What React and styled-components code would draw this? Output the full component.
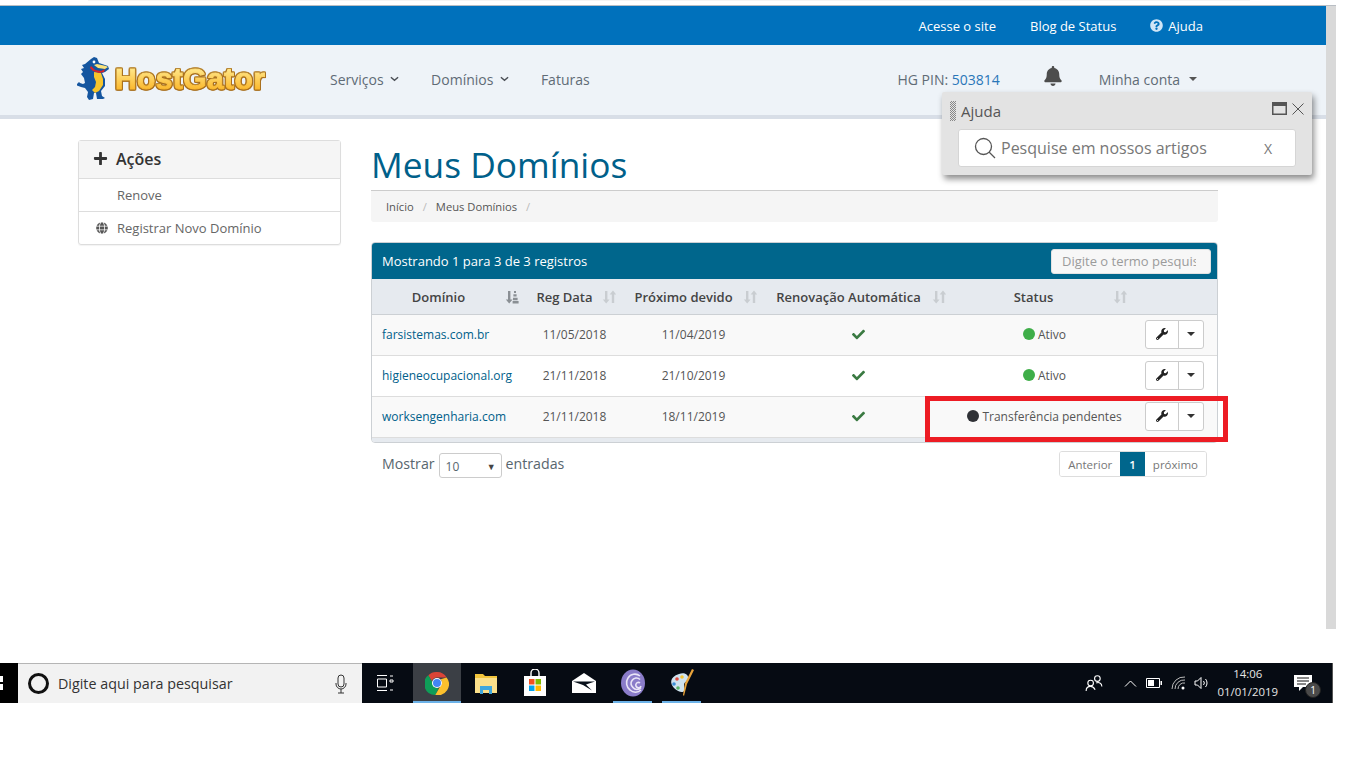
import React from 'react';
import styled, { createGlobalStyle, css } from 'styled-components';
import { FaBell, FaCheck, FaGlobe, FaPlus, FaQuestionCircle, FaWrench } from 'react-icons/fa';

const rows = [
  { domain: 'farsistemas.com.br', reg: '11/05/2018', due: '11/04/2019', status: 'Ativo', dot: '#3fae49' },
  { domain: 'higieneocupacional.org', reg: '21/11/2018', due: '21/10/2019', status: 'Ativo', dot: '#3fae49' },
  { domain: 'worksengenharia.com', reg: '21/11/2018', due: '18/11/2019', status: 'Transferência pendentes', dot: '#2f3136' },
];

function SortIcon({ sorted }) {
  return (
    <SortSvg viewBox="0 0 14 14" $sorted={sorted}>
      <path d="M3 1h2.400v8.400H7.600L4.200 13.400 0.800 9.400H3z" />
      {sorted ? (
        <path d="M9 1h2v2H9zM8.400 4.200h3.200v2.400H8.400zM8 7.800h4.600v2.400H8zM7.600 11h6v2.400h-6z" />
      ) : (
        <path d="M9.800 13V4.600H7.600L11 .6l3.400 4h-2.200V13z" />
      )}
    </SortSvg>
  );
}

function Gator() {
  return (
    <svg width="33" height="45" viewBox="0 0 33 45">
      <path fill="#14559f" d="M14 2l3-2 3 1 2 5 9 3 1 3-4 3-3 1 3 6v7l-4 5 1 5 3 2-2 1h-6l-1-6h-2l-1 6-4 1-2-3 1-5-3-4-4-1-5-2 3-3 1 1 3 1 2-1-1-5-3-4 2-2-2-3 3-1-2-3 3-1z" />
      <path fill="#f7c52b" d="M17 15l7 1 2 6v6l-4 6-4 2-3-3 3-3 1-5-2-5z" />
      <path fill="#d8232a" d="M14 9l4 4 6 1 4-2-1 3-5 1-6-2-3-3z" />
      <path fill="#fbe27a" d="M20 7l9 2 2 1-3 2-7-1-4-3z" />
      <circle cx="17" cy="5" r="1.400" fill="#fff" />
    </svg>
  );
}

function ChromeIcon() {
  return (
    <svg width="24" height="24" viewBox="0 0 24 24">
      <path fill="#db4437" d="M12 1a11 11 0 0 1 9.600 5.500H12a5.500 5.500 0 0 0-5.200 3.700L3.300 4.300A11 11 0 0 1 12 1z" />
      <path fill="#0f9d58" d="M3.300 4.300l4.800 8.300a5.500 5.500 0 0 0 5.600 4.700l-3.400 6.600A11 11 0 0 1 3.300 4.300z" />
      <path fill="#fbc02d" d="M21.600 6.500A11 11 0 0 1 10.300 23.900l4.800-8.400a5.500 5.500 0 0 0 .6-7.200z" />
      <circle cx="12" cy="12" r="5" fill="#fff" />
      <circle cx="12" cy="12" r="4" fill="#4285f4" />
    </svg>
  );
}

function FolderIcon() {
  return (
    <svg width="24" height="24" viewBox="0 0 24 24">
      <path fill="#f2c53d" d="M1 3h8l2 2h12v17H1z" />
      <path fill="#fbe08a" d="M1 7h22v15H1z" />
      <path fill="#3fa7dd" d="M6 15h12v8h-3v-4H9v4H6z" />
    </svg>
  );
}

function StoreIcon() {
  return (
    <svg width="24" height="28" viewBox="0 0 24 28">
      <path fill="none" stroke="#fff" strokeWidth="1.400" d="M8 8V4a4 4 0 0 1 8 0v4" />
      <path fill="#fff" d="M1 7h22v20H1z" />
      <path fill="#f25022" d="M6 10h5.500v5.500H6z" />
      <path fill="#7fba00" d="M12.500 10H18v5.500h-5.500z" />
      <path fill="#00a4ef" d="M6 16.500h5.500V22H6z" />
      <path fill="#ffb900" d="M12.500 16.500H18V22h-5.500z" />
    </svg>
  );
}

function MailIcon() {
  return (
    <svg width="24" height="22" viewBox="0 0 24 22">
      <path fill="#fff" d="M12 1l12 8v12H0V9z" />
      <path fill="#07101a" d="M1 9.500l22 0-9 3 6 6-9-5.500-10-3.500z" />
    </svg>
  );
}

function TorrentIcon() {
  return (
    <svg width="24" height="28" viewBox="0 0 24 28">
      <ellipse cx="12" cy="14" rx="12" ry="13.500" fill="#8a7cc9" />
      <path fill="none" stroke="#e9e5f7" strokeWidth="1.600" d="M19 7a8 8 0 0 0-12 2 9 9 0 0 0 2 12 8 8 0 0 0 11 0M19 10.500a5 5 0 0 0-8 1 5 5 0 0 0 1 7 5 5 0 0 0 8 0M19 14a2.500 2.500 0 0 0-4 1 2.500 2.500 0 0 0 5 2" />
    </svg>
  );
}

function PaintIcon() {
  return (
    <svg width="26" height="30" viewBox="0 0 26 30">
      <path fill="#cfe3ef" d="M10 6c6-2 10 1 9 5-1 3-4 3-4 6s1 4 0 6-6 1-10-3S0 9 10 6z" />
      <circle cx="8" cy="11" r="1.800" fill="#e04b3f" />
      <circle cx="13" cy="9" r="1.800" fill="#f4c534" />
      <circle cx="5" cy="16" r="1.800" fill="#3d8fd6" />
      <circle cx="9" cy="20" r="1.800" fill="#58b368" />
      <path fill="#e8a33a" d="M23 1l2 1-7 14-3 12-1-1 2-12z" />
    </svg>
  );
}

function App() {
  return (
    <Page>
      <GlobalStyle />
      <Sliver />
      <Screen>
        <Browser>
          <TopBar>
            <TopLink>Acesse o site</TopLink>
            <TopLink>Blog de Status</TopLink>
            <TopLink>
              <HelpMark><FaQuestionCircle /></HelpMark>
              Ajuda
            </TopLink>
          </TopBar>
          <NavBar>
            <Logo>
              <Gator />
              <LogoText>HostGator</LogoText>
            </Logo>
            <NavMenu>
              <NavItem>Serviços<Chevron viewBox="0 0 10 6"><path d="M1 1l4 3.500L9 1" /></Chevron></NavItem>
              <NavItem>Domínios<Chevron viewBox="0 0 10 6"><path d="M1 1l4 3.500L9 1" /></Chevron></NavItem>
              <NavItem>Faturas</NavItem>
            </NavMenu>
            <NavRight>
              <Pin>HG PIN: <PinValue>503814</PinValue></Pin>
              <BellWrap><FaBell /></BellWrap>
              <Account>Minha conta<AccountCaret /></Account>
            </NavRight>
          </NavBar>
          <Content>
            <ActionsCard>
              <ActionsHead><FaPlus />Ações</ActionsHead>
              <ActionRow><ActionIcon /><span>Renove</span></ActionRow>
              <ActionRow><ActionIcon><FaGlobe /></ActionIcon><span>Registrar Novo Domínio</span></ActionRow>
            </ActionsCard>
            <Main>
              <Title>Meus Domínios</Title>
              <Breadcrumb>
                <span>Início</span><Slash>/</Slash><span>Meus Domínios</span><Slash>/</Slash>
              </Breadcrumb>
              <TablePanel>
                <PanelHead>
                  <span>Mostrando 1 para 3 de 3 registros</span>
                  <SearchInput readOnly placeholder="Digite o termo pesquisa" />
                </PanelHead>
                <HeadRow>
                  <HeadCell><HeadLabel>Domínio</HeadLabel><SortIcon sorted /></HeadCell>
                  <HeadCell><HeadLabel>Reg Data</HeadLabel><SortIcon /></HeadCell>
                  <HeadCell><HeadLabel>Próximo devido</HeadLabel><SortIcon /></HeadCell>
                  <HeadCell><HeadLabel>Renovação Automática</HeadLabel><SortIcon /></HeadCell>
                  <HeadCell><HeadLabel>Status</HeadLabel><SortIcon /></HeadCell>
                  <span />
                </HeadRow>
                {rows.map((row, i) => (
                  <BodyRow key={row.domain} $odd={i % 2 === 0}>
                    <DomainLink>{row.domain}</DomainLink>
                    <DateCell>{row.reg}</DateCell>
                    <DateCell>{row.due}</DateCell>
                    <CheckCell><FaCheck /></CheckCell>
                    <StatusCell><Dot $color={row.dot} />{row.status}</StatusCell>
                    <ActionCell>
                      <ToolGroup>
                        <WrenchButton><FaWrench /></WrenchButton>
                        <CaretButton><SmallCaret /></CaretButton>
                      </ToolGroup>
                    </ActionCell>
                  </BodyRow>
                ))}
                <PanelFoot />
                <Highlight />
              </TablePanel>
              <TableFooter>
                <Entries>
                  Mostrar
                  <SelectBox>10<SelectArrow>▼</SelectArrow></SelectBox>
                  entradas
                </Entries>
                <Pagination>
                  <PageButton>Anterior</PageButton>
                  <PageButton $active>1</PageButton>
                  <PageButton>próximo</PageButton>
                </Pagination>
              </TableFooter>
            </Main>
          </Content>
        </Browser>
        <Scrollbar />
        <HelpPanel>
          <HelpHead>
            <Grip />
            <HelpTitle>Ajuda</HelpTitle>
            <svg width="15" height="13" viewBox="0 0 15 13">
              <path fill="#555" d="M0 0h15v13H0z" />
              <path fill="#e3e3e3" d="M1.500 4h12v7.500h-12z" />
            </svg>
            <svg width="12" height="12" viewBox="0 0 12 12">
              <path stroke="#555" strokeWidth="1" d="M.5.500l11 11M11.500.500l-11 11" />
            </svg>
          </HelpHead>
          <HelpSearch>
            <svg width="22" height="22" viewBox="0 0 22 22" fill="none" stroke="#555" strokeWidth="1.300">
              <circle cx="9.500" cy="9.500" r="8" />
              <path d="M15 15l6 6" />
            </svg>
            <HelpPlaceholder>Pesquise em nossos artigos</HelpPlaceholder>
            <HelpClear>X</HelpClear>
          </HelpSearch>
        </HelpPanel>
      </Screen>
      <Taskbar>
        <StartEdge />
        <TaskSearch>
          <Cortana />
          <TaskSearchText>Digite aqui para pesquisar</TaskSearchText>
          <svg width="12" height="20" viewBox="0 0 12 20" fill="none" stroke="#333" strokeWidth="1">
            <rect x="3" y="1" width="6" height="12" rx="3" />
            <path d="M1 9v1a5 5 0 0 0 10 0V9M6 15v4M3 19h6" />
          </svg>
        </TaskSearch>
        <TaskView>
          <svg width="18" height="18" viewBox="0 0 18 18" fill="none" stroke="#fff" strokeWidth="1">
            <path d="M1 1.500h10M1 16.500h10M1.500 5h9v8h-9zM14 2h3M14 6h3v2h-3zM14 16h3" />
          </svg>
        </TaskView>
        <TaskApp $active $bar><ChromeIcon /></TaskApp>
        <TaskApp><FolderIcon /></TaskApp>
        <TaskApp><StoreIcon /></TaskApp>
        <TaskApp><MailIcon /></TaskApp>
        <TaskApp $bar><TorrentIcon /></TaskApp>
        <TaskApp $bar><PaintIcon /></TaskApp>
        <Tray>
          <svg width="18" height="18" viewBox="0 0 16 16" fill="none" stroke="#fff" strokeWidth="1">
            <circle cx="5" cy="8" r="2.500" /><path d="M1 15c0-3 2-4 4-4s3 1 4 3" />
            <circle cx="11" cy="4" r="2.500" /><path d="M10 8c2-1 5 0 5 3" />
          </svg>
          <TrayCaret viewBox="0 0 12 7"><path d="M.5 6.500L6 1l5.500 5.500" /></TrayCaret>
          <svg width="16" height="10" viewBox="0 0 16 10">
            <path fill="none" stroke="#fff" d="M.5.500h13v9H.5z" />
            <path fill="#fff" d="M2 2h6v6H2zM14.500 3H16v4h-1.500z" />
          </svg>
          <svg width="16" height="14" viewBox="0 0 16 14" fill="none" stroke="#bbb" strokeWidth="1">
            <path d="M1 13A12 12 0 0 1 14 1M4 13a9 9 0 0 1 10-9M7 13a6 6 0 0 1 7-6" />
            <circle cx="12" cy="12" r="1.500" fill="#fff" stroke="none" />
          </svg>
          <VolumeIcon width="16" height="14" viewBox="0 0 16 14" fill="none" stroke="#fff" strokeWidth="1">
            <path d="M1 5h2.500L7 1.500v11L3.500 9H1zM9.500 5a3 3 0 0 1 0 4M11.500 3a6 6 0 0 1 0 8" />
          </VolumeIcon>
          <Clock><span>14:06</span><span>01/01/2019</span></Clock>
          <Notice>
            <svg width="18" height="16" viewBox="0 0 18 16">
              <path fill="#fff" d="M0 0h18v12h-9l-4 4v-4H0z" />
              <path stroke="#111" d="M3 3h12M3 6h12M3 9h9" />
            </svg>
            <NoticeBadge>1</NoticeBadge>
          </Notice>
        </Tray>
      </Taskbar>
    </Page>
  );
}

const GlobalStyle = createGlobalStyle`
  html, body {
    margin: 0;
    padding: 0;
    background: #fff;
    overflow: hidden;
  }
  * {
    box-sizing: border-box;
  }
`;

const Page = styled.div`
  width: 1366px;
  height: 768px;
  font-family: "Open Sans", "Liberation Sans", sans-serif;
  color: #58666e;
`;

const Sliver = styled.div`
  width: 1162px;
  height: 1px;
  margin-left: 88px;
  background: #f3f3f3;
`;

const Screen = styled.div`
  position: relative;
  display: flex;
  width: 1336px;
  height: 624px;
  margin-top: 4px;
  border-top: 1px solid #b9bec4;
`;

const Browser = styled.div`
  flex: 1;
  display: flex;
  flex-direction: column;
  min-width: 0;
`;

const Scrollbar = styled.div`
  width: 10px;
  background: #d9d9d9;
`;

const TopBar = styled.div`
  height: 39px;
  background: #0071bc;
  display: flex;
  align-items: center;
  justify-content: flex-end;
  gap: 34px;
  padding-right: 123px;
`;

const TopLink = styled.a`
  display: flex;
  align-items: center;
  color: #fff;
  font-size: 13px;
`;

const HelpMark = styled.span`
  display: flex;
  margin-right: 5px;
  color: #cfe6f7;
  font-size: 13px;
`;

const NavBar = styled.div`
  height: 74px;
  background: #eef3f8;
  border-bottom: 4px solid #d8dee7;
  display: flex;
  align-items: center;
  padding: 0 129px 2px 77px;
`;

const Logo = styled.div`
  display: flex;
  align-items: center;
  width: 253px;
  gap: 5px;
`;

const LogoText = styled.span`
  font: bold 30px "Liberation Sans", Arial, sans-serif;
  letter-spacing: 0.4px;
  background: linear-gradient(#ffe382 25%, #fbb92e 80%);
  -webkit-background-clip: text;
  background-clip: text;
  color: transparent;
  -webkit-text-stroke: 1px transparent;
  filter: drop-shadow(1px 0 0 #a9701f) drop-shadow(-1px 0 0 #a9701f) drop-shadow(0 1px 0 #a9701f) drop-shadow(0 -1px 0 #b98a3a);
`;

const NavMenu = styled.div`
  display: flex;
  align-items: center;
  gap: 32px;
  font-size: 14px;
`;

const NavItem = styled.a`
  display: flex;
  align-items: center;
  color: #5f6b76;
`;

const Chevron = styled.svg`
  width: 9px;
  height: 6px;
  margin-left: 6.500px;
  fill: none;
  stroke: #4a4f55;
  stroke-width: 1.600;
`;

const NavRight = styled.div`
  margin-left: auto;
  display: flex;
  align-items: center;
  font-size: 14px;
`;

const Pin = styled.span`
  color: #5f6b76;
`;

const PinValue = styled.span`
  color: #2a76b8;
`;

const BellWrap = styled.span`
  display: flex;
  margin: -6px 36px 0 43px;
  color: #4d4d4d;
  font-size: 20px;
`;

const Account = styled.span`
  display: flex;
  align-items: center;
  color: #5f6b76;
`;

const AccountCaret = styled.i`
  margin-left: 9px;
  border-top: 4px solid #555;
  border-left: 4px solid transparent;
  border-right: 4px solid transparent;
`;

const Content = styled.div`
  display: grid;
  grid-template-columns: 263px 1fr;
  column-gap: 30px;
  align-items: start;
  padding: 21px 108px 0 78px;
`;

const ActionsCard = styled.div`
  border: 1px solid #ddd;
  border-radius: 3px;
  box-shadow: 0 1px 1px rgba(0, 0, 0, 0.05);
`;

const ActionsHead = styled.div`
  height: 37px;
  display: flex;
  align-items: center;
  gap: 8px;
  padding: 0 0 2px 14px;
  background: #f5f5f5;
  color: #333;
  font-size: 16px;
  font-weight: 600;
  svg {
    font-size: 15px;
  }
`;

const ActionRow = styled.div`
  height: 33px;
  display: flex;
  align-items: center;
  border-top: 1px solid #ddd;
  font-size: 13px;
  color: #666;
`;

const ActionIcon = styled.span`
  width: 38px;
  padding-left: 17px;
  display: flex;
  color: #555;
  font-size: 12px;
`;

const Main = styled.div`
  min-width: 0;
`;

const Title = styled.h1`
  height: 50px;
  margin: 0;
  font-size: 35.300px;
  line-height: 48px;
  font-weight: 400;
  color: #00608a;
`;

const Breadcrumb = styled.div`
  height: 32px;
  display: flex;
  align-items: center;
  padding-left: 15px;
  background: #f5f5f5;
  border-top: 1px solid #ccc;
  border-radius: 0 0 3px 3px;
  font-size: 11.200px;
  color: #555;
`;

const Slash = styled.span`
  margin: 0 9px;
  color: #bbb;
`;

const TablePanel = styled.div`
  position: relative;
  margin-top: 20px;
  border: 1px solid #ccd0d4;
  border-radius: 4px;
`;

const PanelHead = styled.div`
  height: 36px;
  display: flex;
  align-items: center;
  justify-content: space-between;
  padding: 0 6px 0 10px;
  background: #00668c;
  border-radius: 3px 3px 0 0;
  color: #fff;
  font-size: 13px;
`;

const SearchInput = styled.input`
  width: 160px;
  height: 25px;
  padding: 0 14px 0 10px;
  border: 1px solid #e2e2e2;
  border-radius: 3px;
  background: #f7f7f7;
  font: 13px "Open Sans", sans-serif;
  &::placeholder {
    color: #9b9b9b;
  }
`;

const tableColumns = css`
  display: grid;
  grid-template-columns: 155px 97px 141px 189px 181px 1fr;
`;

const HeadRow = styled.div`
  ${tableColumns}
  height: 36px;
  padding-top: 1px;
  align-items: center;
  background: #e6eaef;
  border-bottom: 1px solid #ccd0d4;
`;

const HeadCell = styled.div`
  display: flex;
  align-items: center;
  padding: 0 8px 0 0;
`;

const HeadLabel = styled.span`
  flex: 1;
  text-align: center;
  font-size: 13px;
  font-weight: 600;
  color: #444;
  white-space: nowrap;
`;

const SortSvg = styled.svg`
  flex: none;
  width: 14px;
  height: 14px;
  fill: ${(p) => (p.$sorted ? '#8a8f94' : '#c9cdd1')};
`;

const BodyRow = styled.div`
  ${tableColumns}
  height: 41px;
  padding-bottom: 2px;
  align-items: center;
  background: ${(p) => (p.$odd ? '#f9f9f9' : '#fff')};
  border-bottom: 1px solid #ddd;
  font-size: 12px;
  color: #555;
`;

const DomainLink = styled.a`
  padding-left: 10px;
  color: #00608a;
  white-space: nowrap;
`;

const DateCell = styled.div`
  text-align: center;
  padding-right: 2px;
`;

const CheckCell = styled.div`
  display: flex;
  justify-content: center;
  padding-right: 3px;
  color: #3a7a42;
  font-size: 13px;
`;

const StatusCell = styled.div`
  display: flex;
  align-items: center;
  justify-content: center;
  gap: 3px;
  white-space: nowrap;
`;

const Dot = styled.i`
  width: 12px;
  height: 12px;
  border-radius: 50%;
  background: ${(p) => p.$color};
`;

const ActionCell = styled.div`
  display: flex;
  justify-content: flex-end;
  padding-right: 13px;
`;

const ToolGroup = styled.div`
  display: flex;
  height: 29px;
  border: 1px solid #ccc;
  border-radius: 3px;
  background: #fff;
`;

const WrenchButton = styled.span`
  width: 33px;
  display: flex;
  align-items: center;
  justify-content: center;
  color: #222;
  font-size: 12px;
  border-right: 1px solid #ccc;
`;

const CaretButton = styled.span`
  width: 24px;
  display: flex;
  align-items: center;
  justify-content: center;
`;

const SmallCaret = styled.i`
  border-top: 4px solid #333;
  border-left: 4px solid transparent;
  border-right: 4px solid transparent;
`;

const PanelFoot = styled.div`
  height: 4px;
  background: #e6eaef;
  border-radius: 0 0 3px 3px;
`;

const Highlight = styled.div`
  position: absolute;
  left: 553px;
  top: 153px;
  width: 303px;
  height: 46px;
  border: 5px solid #ed1c24;
  pointer-events: none;
`;

const TableFooter = styled.div`
  display: flex;
  align-items: center;
  justify-content: space-between;
  margin-top: 7px;
  padding: 0 11px 0 11px;
`;

const Entries = styled.div`
  display: flex;
  align-items: center;
  gap: 4px;
  margin-top: -2px;
  font-size: 14.200px;
  color: #58666e;
`;

const SelectBox = styled.div`
  width: 63px;
  height: 25px;
  margin-top: 5px;
  display: flex;
  align-items: center;
  justify-content: space-between;
  padding: 2px 5px 0 6px;
  border: 1px solid #ccc;
  border-radius: 3px;
  font-size: 12px;
`;

const SelectArrow = styled.span`
  font-size: 9px;
  color: #444;
`;

const Pagination = styled.div`
  display: flex;
  height: 26px;
  border: 1px solid #ddd;
  border-radius: 3px;
  overflow: hidden;
`;

const PageButton = styled.span`
  display: flex;
  align-items: center;
  padding: 0 ${(p) => (p.$active ? '9px' : '8px')};
  font-size: 11.500px;
  color: ${(p) => (p.$active ? '#fff' : '#777')};
  background: ${(p) => (p.$active ? '#00668c' : '#fff')};
  font-weight: ${(p) => (p.$active ? 600 : 400)};
`;

const HelpPanel = styled.div`
  position: absolute;
  left: 942px;
  top: 86px;
  width: 370px;
  height: 83px;
  padding: 0 16px;
  background: #e3e3e3;
  border-radius: 2px;
  box-shadow: 2px 4px 6px rgba(0, 0, 0, 0.45);
`;

const HelpHead = styled.div`
  height: 37px;
  display: flex;
  align-items: center;
  gap: 5px;
  margin: 0 -8px 0 -8px;
  svg {
    margin-top: -4px;
  }
`;

const Grip = styled.i`
  width: 6px;
  height: 20px;
  margin-top: 1px;
  background: repeating-conic-gradient(#888 0 25%, transparent 0 50%) 0 0 / 2px 2px;
`;

const HelpTitle = styled.span`
  flex: 1;
  font-size: 15px;
  color: #555;
`;

const HelpSearch = styled.div`
  height: 38px;
  display: flex;
  align-items: center;
  padding: 0 23px 0 15px;
  background: #fff;
  border: 1px solid #d5d5d5;
  border-radius: 3px;
`;

const HelpPlaceholder = styled.span`
  flex: 1;
  margin-left: 5px;
  font-size: 16px;
  color: #777;
`;

const HelpClear = styled.span`
  font-size: 14px;
  color: #777;
`;

const Taskbar = styled.div`
  position: relative;
  margin-top: 34px;
  width: 1333px;
  height: 40px;
  display: flex;
  align-items: center;
  background: #060b13;
  border-right: 1px solid #555;
`;

const StartEdge = styled.div`
  width: 18px;
  height: 100%;
  background: #000;
  display: flex;
  align-items: center;
  &::before {
    content: '';
    width: 3px;
    height: 14px;
    background: linear-gradient(#fff 0 6px, transparent 6px 8px, #fff 8px);
  }
`;

const TaskSearch = styled.div`
  width: 344px;
  height: 100%;
  display: flex;
  align-items: center;
  padding: 0 15px 0 10px;
  background: #f2f2f2;
  border-top: 1px solid #b5b5b5;
`;

const Cortana = styled.i`
  width: 21px;
  height: 21px;
  border-radius: 50%;
  border: 3px solid #111;
`;

const TaskSearchText = styled.span`
  flex: 1;
  margin-left: 9px;
  font-size: 14.300px;
  color: #333;
`;

const TaskView = styled.div`
  width: 51px;
  display: flex;
  justify-content: center;
  padding-right: 5px;
`;

const TaskApp = styled.div`
  position: relative;
  width: ${(p) => (p.$active ? '48px' : '49px')};
  height: 100%;
  display: flex;
  align-items: center;
  justify-content: center;
  background: ${(p) => (p.$active ? '#3b3f45' : 'transparent')};
  &::after {
    content: '';
    display: ${(p) => (p.$bar ? 'block' : 'none')};
    position: absolute;
    left: ${(p) => (p.$active ? '0' : '5px')};
    right: ${(p) => (p.$active ? '0' : '5px')};
    bottom: 0;
    height: 2px;
    background: #6cb2e8;
  }
`;

const Tray = styled.div`
  margin-left: auto;
  display: flex;
  align-items: center;
  gap: 9px;
  padding-right: 20px;
`;

const TrayCaret = styled.svg`
  width: 13px;
  height: 7px;
  margin-left: 12px;
  fill: none;
  stroke: #fff;
`;

const VolumeIcon = styled.svg`
  margin-left: -2px;
`;

const Clock = styled.div`
  display: flex;
  flex-direction: column;
  align-items: center;
  margin-left: -1px;
  font-size: 11.400px;
  line-height: 18px;
  color: #e6e6e6;
`;

const Notice = styled.div`
  position: relative;
  margin-left: 7px;
  display: flex;
`;

const NoticeBadge = styled.span`
  position: absolute;
  right: -9px;
  bottom: -7px;
  width: 16px;
  height: 16px;
  border-radius: 50%;
  background: #4a4a4a;
  border: 1px solid #222;
  color: #fff;
  font-size: 10px;
  line-height: 14px;
  text-align: center;
`;

export default App;
